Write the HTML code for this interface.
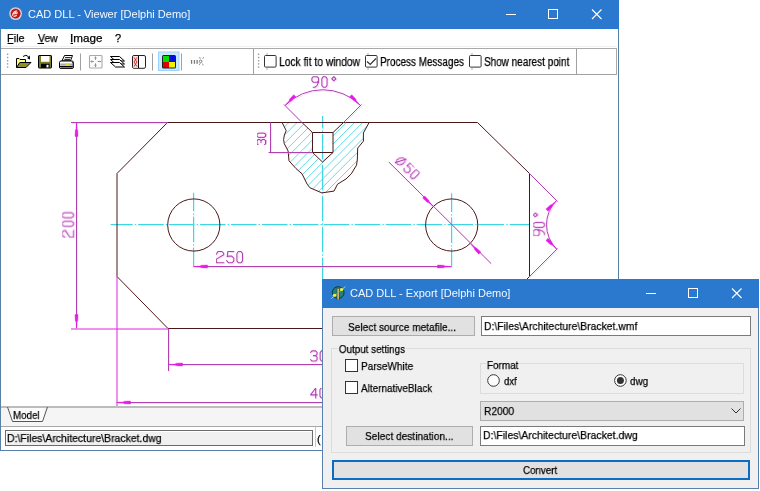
<!DOCTYPE html>
<html><head><meta charset="utf-8"><style>
*{margin:0;padding:0;box-sizing:border-box}
html,body{width:760px;height:491px;overflow:hidden;background:#fff;font-family:"Liberation Sans",sans-serif;color:#000}
.a{position:absolute}
.t{position:absolute;white-space:nowrap;line-height:1;font-family:"Liberation Sans",sans-serif;transform-origin:0 0;will-change:transform;-webkit-text-stroke:0.25px currentColor}
svg.a{overflow:visible}
</style></head><body>
<div class="a" style="left:0px;top:0px;width:619px;height:451px;border:1px solid #5b80a8;background:#fff"></div>
<div class="a" style="left:0px;top:0px;width:619px;height:29px;background:#2b79cf"></div>
<div class="a" style="left:1px;top:46px;width:616px;height:1px;background:#f0f0f0"></div>
<div class="a" style="left:1px;top:48px;width:616px;height:27px;border-top:1px solid #a9a9a9;border-bottom:1px solid #a0a0a0;border-right:1px solid #a9a9a9;background:#fff"></div>
<svg class="a" style="left:0;top:0" width="619" height="406" viewBox="0 0 619 406">
<defs><filter id="mh" filterUnits="userSpaceOnUse" x="0" y="0" width="619" height="406"><feDropShadow dx="0.8" dy="1" stdDeviation="0.35" flood-color="#ff90ff" flood-opacity="0.35"/></filter><filter id="ch" filterUnits="userSpaceOnUse" x="0" y="0" width="619" height="406"><feDropShadow dx="0.7" dy="0.9" stdDeviation="0.35" flood-color="#70f0ff" flood-opacity="0.45"/></filter><clipPath id="dc"><rect x="1" y="75" width="617" height="331"/></clipPath>
<clipPath id="hc"><path clip-rule="evenodd" d="M282.1,122.5 286.2,130.6 284.4,135 283.6,139.4 284.2,143.5 288.1,151 289,160.8 296,168.6 302,173.8 307.2,184.2 309.8,187.7 321.9,192.9 334,191.1 337.5,184.2 346,179 351.3,173.8 356.5,165.2 357.3,160 357.7,148.1 363.4,141.2 363.4,133 369.1,122.5 Z M302,122.5 L312.5,132.5 L312.5,152.5 L322.5,162 L333,152.5 L333,132.5 L343.5,122.5 Z"/></clipPath></defs>
<g clip-path="url(#dc)">
<g clip-path="url(#hc)"><path d="M94.80000000000001,210 L194.8,110 M103.0,210 L203.0,110 M111.20000000000005,210 L211.20000000000005,110 M119.40000000000003,210 L219.40000000000003,110 M127.60000000000002,210 L227.60000000000002,110 M135.8,210 L235.8,110 M144.0,210 L244.0,110 M152.20000000000005,210 L252.20000000000005,110 M160.40000000000003,210 L260.40000000000003,110 M168.60000000000002,210 L268.6,110 M176.8,210 L276.8,110 M185.0,210 L285.0,110 M193.20000000000005,210 L293.20000000000005,110 M201.40000000000003,210 L301.40000000000003,110 M209.60000000000002,210 L309.6,110 M217.8,210 L317.8,110 M226.0,210 L326.0,110 M234.2,210 L334.2,110 M242.40000000000003,210 L342.40000000000003,110 M250.60000000000002,210 L350.6,110 M258.8,210 L358.8,110 M267.0,210 L367.0,110 M275.2,210 L375.2,110 M283.40000000000003,210 L383.40000000000003,110 M291.6,210 L391.6,110 M299.8,210 L399.8,110 M308.0,210 L408.0,110 M316.20000000000005,210 L416.20000000000005,110 M324.4,210 L424.4,110 M332.6,210 L432.6,110 M340.79999999999995,210 L440.79999999999995,110 M349.0,210 L449.0,110 M357.20000000000005,210 L457.20000000000005,110 M365.4,210 L465.4,110 M373.6,210 L473.6,110 M381.79999999999995,210 L481.79999999999995,110 M390.0,210 L490.0,110 M398.20000000000005,210 L498.20000000000005,110 M406.4,210 L506.4,110 M414.6,210 L514.6,110" stroke="#52d8e2" stroke-width="0.9" fill="none"/></g>
<line x1="110.6" y1="224.5" x2="529" y2="224.5" stroke="#3cd6e2" filter="url(#ch)" stroke-width="1" stroke-dasharray="25.5 2.2 1.3 1.95" stroke-dashoffset="3.45"/>
<line x1="322.5" y1="116" x2="322.5" y2="406" stroke="#3cd6e2" filter="url(#ch)" stroke-width="1" stroke-dasharray="25.5 2.2 1.3 1.95" stroke-dashoffset="13.1"/>
<line x1="193.5" y1="192.8" x2="193.5" y2="266.5" stroke="#3cd6e2" filter="url(#ch)" stroke-width="1" stroke-dasharray="25.5 2.2 1.3 1.95" stroke-dashoffset="7.1"/>
<line x1="451.5" y1="193.2" x2="451.5" y2="266.5" stroke="#3cd6e2" filter="url(#ch)" stroke-width="1" stroke-dasharray="25.5 2.2 1.3 1.95" stroke-dashoffset="6.7"/>
<path d="M167.5,122.5 L477.5,122.5 L529.5,173.5 L529.5,276.5 L477.5,328.5 L168,328.5 L117,276.5 L117,173.5 Z" fill="none" stroke="#4a1818" stroke-width="1"/>
<path d="M282.1,122.5 286.2,130.6 284.4,135 283.6,139.4 284.2,143.5 288.1,151 289,160.8 296,168.6 302,173.8 307.2,184.2 309.8,187.7 321.9,192.9 334,191.1 337.5,184.2 346,179 351.3,173.8 356.5,165.2 357.3,160 357.7,148.1 363.4,141.2 363.4,133 369.1,122.5" fill="none" stroke="#4a1818" stroke-width="1"/>
<path d="M302,122.5 L312.5,132.5 L333,132.5 L343.5,122.5 M312.5,132.5 L312.5,152.5 L333,152.5 L333,132.5 M312.5,152.5 L322.5,162 L333,152.5" fill="none" stroke="#4a1818" stroke-width="1"/>
<circle cx="193.8" cy="225" r="26.1" fill="none" stroke="#4a1818" stroke-width="1"/>
<circle cx="451.7" cy="225" r="26.1" fill="none" stroke="#4a1818" stroke-width="1"/>
<line x1="71" y1="122.5" x2="167.5" y2="122.5" stroke="#b040b0" filter="url(#mh)" stroke-width="1" />
<line x1="71" y1="329" x2="168" y2="329" stroke="#e020e0" stroke-width="1" />
<line x1="76.5" y1="122.5" x2="76.5" y2="328.5" stroke="#b040b0" filter="url(#mh)" stroke-width="1" />
<polygon points="76.50,123.00 77.00,129.00 77.75,130.50 78.00,136.50 75.00,136.50 75.25,130.50 76.00,129.00" fill="#e81ae8" stroke="#e81ae8" stroke-width="0.4"/>
<polygon points="76.50,328.00 76.00,322.00 75.25,320.50 75.00,314.50 78.00,314.50 77.75,320.50 77.00,322.00" fill="#e81ae8" stroke="#e81ae8" stroke-width="0.4"/>
<path transform="translate(62.2,237.6) rotate(-90)" d="M0.30,2.70 L1.74,0.00 L5.52,0.00 L6.96,1.90 L6.96,3.20 L0.30,7.60 L0.30,11.30 L7.14,11.30 M12.55,0.00 L14.89,0.00 L16.24,2.00 L16.24,9.30 L14.89,11.30 L12.55,11.30 L11.20,9.30 L11.20,2.00 L12.55,0.00 M21.15,0.00 L23.49,0.00 L24.84,2.00 L24.84,9.30 L23.49,11.30 L21.15,11.30 L19.80,9.30 L19.80,2.00 L21.15,0.00" fill="none" stroke="#b040b0" filter="url(#mh)" stroke-width="1.1" stroke-linejoin="round" stroke-linecap="round"/>
<line x1="270.5" y1="122.5" x2="270.5" y2="152.5" stroke="#b040b0" filter="url(#mh)" stroke-width="1" />
<line x1="268.5" y1="152.5" x2="312.5" y2="152.5" stroke="#b040b0" filter="url(#mh)" stroke-width="1" />
<path transform="translate(257,145) rotate(-90)" d="M0.00,1.22 L1.22,0.00 L4.26,0.00 L5.47,1.22 L5.47,2.74 L4.26,4.03 L2.28,4.03 M4.26,4.03 L5.47,5.32 L5.47,7.30 L4.26,8.59 L1.22,8.59 L0.00,7.30 M8.74,0.00 L10.72,0.00 L11.86,1.52 L11.86,7.07 L10.72,8.59 L8.74,8.59 L7.60,7.07 L7.60,1.52 L8.74,0.00" fill="none" stroke="#b040b0" filter="url(#mh)" stroke-width="1.1" stroke-linejoin="round" stroke-linecap="round"/>
<path d="M285.27,105.27 A53,53 0 0 1 360.23,105.27" fill="none" stroke="#b040b0" filter="url(#mh)" stroke-width="1"/>
<line x1="302" y1="122.5" x2="284" y2="104.5" stroke="#b040b0" filter="url(#mh)" stroke-width="1" />
<line x1="343.5" y1="122.5" x2="361.5" y2="104.5" stroke="#b040b0" filter="url(#mh)" stroke-width="1" />
<polygon points="285.27,105.27 289.16,100.68 289.69,99.09 293.76,94.67 295.88,96.79 291.46,100.85 289.87,101.38" fill="#e81ae8" stroke="#e81ae8" stroke-width="0.4"/>
<polygon points="360.23,105.27 355.63,101.38 354.04,100.85 349.62,96.79 351.74,94.67 355.81,99.09 356.34,100.68" fill="#e81ae8" stroke="#e81ae8" stroke-width="0.4"/>
<path transform="translate(311.9,76.7) rotate(0)" d="M6.70,3.91 L5.21,5.58 L1.49,5.58 L0.00,3.91 L0.00,1.49 L1.49,0.00 L5.21,0.00 L6.70,1.49 L6.70,5.21 L5.02,8.93 L2.98,10.51 L1.30,10.51 M11.35,0.00 L13.76,0.00 L15.16,1.86 L15.16,8.65 L13.76,10.51 L11.35,10.51 L9.95,8.65 L9.95,1.86 L11.35,0.00 M21.95,0.00 L23.99,2.05 L21.95,4.09 L19.90,2.05 L21.95,0.00" fill="none" stroke="#b040b0" filter="url(#mh)" stroke-width="1.1" stroke-linejoin="round" stroke-linecap="round"/>
<path d="M556.53,200.53 A34.25,34.25 0 0 0 556.53,248.97" fill="none" stroke="#b040b0" filter="url(#mh)" stroke-width="1"/>
<line x1="529.5" y1="173.5" x2="557.5" y2="201.5" stroke="#b040b0" filter="url(#mh)" stroke-width="1" />
<line x1="529.5" y1="276.5" x2="557.5" y2="248.5" stroke="#b040b0" filter="url(#mh)" stroke-width="1" />
<polygon points="556.53,200.53 552.64,205.13 552.11,206.72 548.05,211.14 545.92,209.02 550.34,204.95 551.94,204.42" fill="#e81ae8" stroke="#e81ae8" stroke-width="0.4"/>
<polygon points="556.53,248.97 551.94,245.08 550.34,244.55 545.92,240.48 548.05,238.36 552.11,242.78 552.64,244.37" fill="#e81ae8" stroke="#e81ae8" stroke-width="0.4"/>
<path transform="translate(533.2,236.1) rotate(-90)" d="M6.34,4.20 L4.93,6.00 L1.41,6.00 L0.00,4.20 L0.00,1.60 L1.41,0.00 L4.93,0.00 L6.34,1.60 L6.34,5.60 L4.75,9.60 L2.82,11.30 L1.23,11.30 M9.92,0.00 L12.21,0.00 L13.53,2.00 L13.53,9.30 L12.21,11.30 L9.92,11.30 L8.60,9.30 L8.60,2.00 L9.92,0.00 M21.14,0.00 L23.07,2.20 L21.14,4.40 L19.20,2.20 L21.14,0.00" fill="none" stroke="#b040b0" filter="url(#mh)" stroke-width="1.1" stroke-linejoin="round" stroke-linecap="round"/>
<line x1="388.9" y1="162.1" x2="491.1" y2="263.5" stroke="#b040b0" filter="url(#mh)" stroke-width="1" />
<polygon points="433.30,206.60 428.70,202.71 427.11,202.18 422.69,198.11 424.81,195.99 428.88,200.41 429.41,202.00" fill="#e81ae8" stroke="#e81ae8" stroke-width="0.4"/>
<polygon points="470.30,243.60 474.90,247.49 476.49,248.02 480.91,252.09 478.79,254.21 474.72,249.79 474.19,248.20" fill="#e81ae8" stroke="#e81ae8" stroke-width="0.4"/>
<ellipse cx="400.6" cy="161.2" rx="4.6" ry="3.2" transform="rotate(-22 400.6 161.2)" fill="none" stroke="#b040b0" filter="url(#mh)" stroke-width="1.1"/>
<line x1="394.8" y1="162.8" x2="406.5" y2="159" stroke="#b040b0" filter="url(#mh)" stroke-width="1.1" />
<path transform="translate(409.8,162.1) rotate(45)" d="M6.34,0.00 L1.06,0.00 L0.53,4.58 L1.94,4.05 L4.58,4.05 L6.34,5.81 L6.34,8.45 L4.75,9.94 L1.76,9.94 L0.00,8.10 M11.00,0.00 L13.29,0.00 L14.61,1.76 L14.61,8.18 L13.29,9.94 L11.00,9.94 L9.68,8.18 L9.68,1.76 L11.00,0.00" fill="none" stroke="#b040b0" filter="url(#mh)" stroke-width="1.1" stroke-linejoin="round" stroke-linecap="round"/>
<line x1="193.5" y1="266.5" x2="451.5" y2="266.5" stroke="#b040b0" filter="url(#mh)" stroke-width="1" />
<polygon points="194.00,266.50 200.00,266.00 201.50,265.25 207.50,265.00 207.50,268.00 201.50,267.75 200.00,267.00" fill="#e81ae8" stroke="#e81ae8" stroke-width="0.4"/>
<polygon points="451.00,266.50 445.00,267.00 443.50,267.75 437.50,268.00 437.50,265.00 443.50,265.25 445.00,266.00" fill="#e81ae8" stroke="#e81ae8" stroke-width="0.4"/>
<path transform="translate(216.3,251.5) rotate(0)" d="M0.00,2.70 L1.60,0.00 L5.80,0.00 L7.40,1.90 L7.40,3.20 L0.00,7.60 L0.00,11.30 L7.60,11.30 M17.50,0.00 L11.50,0.00 L10.90,5.20 L12.50,4.60 L15.50,4.60 L17.50,6.60 L17.50,9.60 L15.70,11.30 L12.30,11.30 L10.30,9.20 M22.10,0.00 L24.70,0.00 L26.20,2.00 L26.20,9.30 L24.70,11.30 L22.10,11.30 L20.60,9.30 L20.60,2.00 L22.10,0.00" fill="none" stroke="#b040b0" filter="url(#mh)" stroke-width="1.1" stroke-linejoin="round" stroke-linecap="round"/>
<line x1="117" y1="276.5" x2="117" y2="406" stroke="#e020e0" stroke-width="1" />
<line x1="168.5" y1="328.5" x2="168.5" y2="371" stroke="#b040b0" filter="url(#mh)" stroke-width="1" />
<line x1="168.5" y1="364.5" x2="619" y2="364.5" stroke="#b040b0" filter="url(#mh)" stroke-width="1" />
<line x1="116.5" y1="402.5" x2="619" y2="402.5" stroke="#b040b0" filter="url(#mh)" stroke-width="1" />
<polygon points="169.00,364.50 175.00,364.00 176.50,363.25 182.50,363.00 182.50,366.00 176.50,365.75 175.00,365.00" fill="#e81ae8" stroke="#e81ae8" stroke-width="0.4"/>
<polygon points="117.00,402.50 123.00,402.00 124.50,401.25 130.50,401.00 130.50,404.00 124.50,403.75 123.00,403.00" fill="#e81ae8" stroke="#e81ae8" stroke-width="0.4"/>
<path transform="translate(310.6,350.9) rotate(0)" d="M0.00,1.44 L1.44,0.00 L5.04,0.00 L6.48,1.44 L6.48,3.24 L5.04,4.77 L2.70,4.77 M5.04,4.77 L6.48,6.30 L6.48,8.64 L5.04,10.17 L1.44,10.17 L0.00,8.64 M10.89,0.00 L13.23,0.00 L14.58,1.80 L14.58,8.37 L13.23,10.17 L10.89,10.17 L9.54,8.37 L9.54,1.80 L10.89,0.00 M20.43,0.00 L22.77,0.00 L24.12,1.80 L24.12,8.37 L22.77,10.17 L20.43,10.17 L19.08,8.37 L19.08,1.80 L20.43,0.00" fill="none" stroke="#b040b0" filter="url(#mh)" stroke-width="1.1" stroke-linejoin="round" stroke-linecap="round"/>
<path transform="translate(310.6,388.0) rotate(0)" d="M5.10,9.94 L5.10,0.00 L0.00,6.86 L6.69,6.86 M10.65,0.00 L12.94,0.00 L14.26,1.76 L14.26,8.18 L12.94,9.94 L10.65,9.94 L9.33,8.18 L9.33,1.76 L10.65,0.00 M19.98,0.00 L22.26,0.00 L23.58,1.76 L23.58,8.18 L22.26,9.94 L19.98,9.94 L18.66,8.18 L18.66,1.76 L19.98,0.00" fill="none" stroke="#b040b0" filter="url(#mh)" stroke-width="1.1" stroke-linejoin="round" stroke-linecap="round"/>
</g></svg>
<div class="a" style="left:1px;top:406px;width:617px;height:21px;background:#f5f5f5;border-top:2px solid #bcbcbc;border-bottom:1px solid #a8a8a8"></div>
<div class="a" style="left:1px;top:427px;width:617px;height:23px;background:#fff"></div>
<div class="a" style="left:12px;top:408px;width:32px;height:14px;background:#fbfbfb"></div>
<div class="a" style="left:5px;top:430px;width:308px;height:16px;background:#f0f0f0;border:1px solid #6a6a6a;box-shadow:inset 1px 1px 0 #fff"></div>
<div class="a" style="left:315px;top:427px;width:4px;height:20px;border-left:1px solid #c8c8c8"></div>
<div class="a" style="left:0px;top:450px;width:619px;height:1px;background:#5b80a8"></div>
<div class="a" style="left:322px;top:279px;width:437px;height:210px;border:1px solid #5a80ae;background:#f0f0f0"></div>
<div class="a" style="left:322px;top:279px;width:437px;height:29px;background:#2b79cf"></div>
<div class="a" style="left:332px;top:316px;width:143px;height:20px;background:#e1e1e1;border:1px solid #adadad"></div>
<div class="a" style="left:481px;top:316px;width:270px;height:20px;background:#fff;border:1px solid #7a7a7a"></div>
<div class="a" style="left:331px;top:348px;width:420px;height:105px;border:1px solid #dcdcdc"></div>
<div class="a" style="left:345px;top:359px;width:13px;height:13px;border:1px solid #333;background:#fff"></div>
<div class="a" style="left:345px;top:381px;width:13px;height:13px;border:1px solid #333;background:#fff"></div>
<div class="a" style="left:480px;top:363px;width:264px;height:31px;border:1px solid #dcdcdc"></div>
<div class="a" style="left:480px;top:401px;width:264px;height:20px;background:#e1e1e1;border:1px solid #adadad"></div>
<div class="a" style="left:346px;top:426px;width:127px;height:20px;background:#e1e1e1;border:1px solid #adadad"></div>
<div class="a" style="left:480px;top:426px;width:265px;height:20px;background:#fff;border:1px solid #7a7a7a"></div>
<div class="a" style="left:332px;top:460px;width:418px;height:20px;background:#e1e1e1;border:2px solid #0a6cc4"></div>
<div class="t" style="left:28.25px;top:9.44px;font-size:11px;color:#f4f8ff;transform:scaleX(1.0019);-webkit-text-stroke:0">CAD DLL - Viewer [Delphi Demo]</div>
<div class="t" style="left:6.85px;top:32.69px;font-size:11px;color:#000;transform:scaleX(0.9915);">File</div>
<div class="t" style="left:37.80px;top:32.69px;font-size:11px;color:#000;transform:scaleX(0.9504);">Vew</div>
<div class="t" style="left:69.74px;top:32.69px;font-size:11px;color:#000;transform:scaleX(1.0598);">Image</div>
<div class="t" style="left:114.60px;top:32.69px;font-size:11px;color:#000;">?</div>
<div class="t" style="left:278.70px;top:55.64px;font-size:12px;color:#000;transform:scaleX(0.8556);">Lock fit to window</div>
<div class="t" style="left:380.30px;top:55.64px;font-size:12px;color:#000;transform:scaleX(0.8284);">Process Messages</div>
<div class="t" style="left:484.40px;top:55.64px;font-size:12px;color:#000;transform:scaleX(0.8300);">Show nearest point</div>
<div class="t" style="left:13.40px;top:409.61px;font-size:10.5px;color:#000;transform:scaleX(0.9320);">Model</div>
<div class="t" style="left:6.50px;top:432.69px;font-size:11px;color:#000;transform:scaleX(0.9509);">D:\Files\Architecture\Bracket.dwg</div>
<div class="t" style="left:316.60px;top:434.39px;font-size:11px;color:#000;">(</div>
<div class="t" style="left:350.25px;top:288.44px;font-size:11px;color:#f4f8ff;transform:scaleX(0.9971);-webkit-text-stroke:0">CAD DLL - Export [Delphi Demo]</div>
<div class="t" style="left:348.25px;top:320.55px;font-size:11.75px;color:#000;transform:scaleX(0.8622);">Select source metafile...</div>
<div class="t" style="left:484.10px;top:319.85px;font-size:11.75px;color:#000;transform:scaleX(0.8825);">D:\Files\Architecture\Bracket.wmf</div>
<div class="t" style="left:338.70px;top:342.95px;font-size:11.75px;color:#000;transform:scaleX(0.8376);background:#f0f0f0;padding:0 1px;margin-left:-1px">Output settings</div>
<div class="t" style="left:360.50px;top:359.75px;font-size:11.75px;color:#000;transform:scaleX(0.8590);">ParseWhite</div>
<div class="t" style="left:361.15px;top:381.55px;font-size:11.75px;color:#000;transform:scaleX(0.8457);">AlternativeBlack</div>
<div class="t" style="left:486.50px;top:358.80px;font-size:11.75px;color:#000;transform:scaleX(0.8460);background:#f0f0f0;padding:0 1px;margin-left:-1px">Format</div>
<div class="t" style="left:503.60px;top:374.65px;font-size:11.75px;color:#000;transform:scaleX(0.8069);">dxf</div>
<div class="t" style="left:630.00px;top:374.75px;font-size:11.75px;color:#000;transform:scaleX(0.8421);">dwg</div>
<div class="t" style="left:483.80px;top:404.85px;font-size:11.75px;color:#000;transform:scaleX(0.8715);">R2000</div>
<div class="t" style="left:364.75px;top:430.05px;font-size:11.75px;color:#000;transform:scaleX(0.8631);">Select destination...</div>
<div class="t" style="left:482.80px;top:429.25px;font-size:11.75px;color:#000;transform:scaleX(0.8906);">D:\Files\Architecture\Bracket.dwg</div>
<div class="t" style="left:523.25px;top:464.05px;font-size:11.75px;color:#000;transform:scaleX(0.8299);">Convert</div>
<svg class="a" style="left:0;top:0" width="760" height="491" viewBox="0 0 760 491">
<circle cx="15.6" cy="13.6" r="6.4" fill="#dcc8d0"/>
<circle cx="15.6" cy="13.6" r="5.6" fill="#f2eef2"/>
<circle cx="15.6" cy="13.6" r="4.7" fill="#c41414" stroke="#901010" stroke-width="0.6"/>
<path d="M12.6,15.8 C12.8,12.5 14.5,11 17.2,11.2 M13.8,14 L17.8,12.6 M13.6,16.6 L16.8,15.4 M15.2,12.2 L16.6,14.2" stroke="#ffe0e0" stroke-width="1.3" fill="none"/>
<line x1="506" y1="14.5" x2="516" y2="14.5" stroke="#ffffff" stroke-width="1"/>
<rect x="548.5" y="9.5" width="9" height="9" fill="none" stroke="#ffffff" stroke-width="1"/>
<path d="M592,9.5 L601.5,19 M601.5,9.5 L592,19" stroke="#ffffff" stroke-width="1.1"/>
<path d="M7.5,43.5 L13.5,43.5 M37.5,43.5 L44,43.5 M70.5,43.5 L73,43.5" stroke="#000" stroke-width="1"/>
<rect x="6.9" y="53.6" width="1.4" height="1.4" fill="#9a9a9a"/>
<rect x="6.9" y="56.8" width="1.4" height="1.4" fill="#9a9a9a"/>
<rect x="6.9" y="60.0" width="1.4" height="1.4" fill="#9a9a9a"/>
<rect x="6.9" y="63.2" width="1.4" height="1.4" fill="#9a9a9a"/>
<rect x="6.9" y="66.4" width="1.4" height="1.4" fill="#9a9a9a"/>
<rect x="257.9" y="53.6" width="1.4" height="1.4" fill="#9a9a9a"/>
<rect x="257.9" y="56.8" width="1.4" height="1.4" fill="#9a9a9a"/>
<rect x="257.9" y="60.0" width="1.4" height="1.4" fill="#9a9a9a"/>
<rect x="257.9" y="63.2" width="1.4" height="1.4" fill="#9a9a9a"/>
<rect x="257.9" y="66.4" width="1.4" height="1.4" fill="#9a9a9a"/>
<line x1="80.5" y1="53.5" x2="80.5" y2="70.5" stroke="#a0a0a0" stroke-width="1"/>
<line x1="152.5" y1="53.5" x2="152.5" y2="70.5" stroke="#a0a0a0" stroke-width="1"/>
<line x1="181.5" y1="53.5" x2="181.5" y2="70.5" stroke="#a0a0a0" stroke-width="1"/>
<line x1="253.5" y1="49" x2="253.5" y2="74" stroke="#a0a0a0" stroke-width="1"/>
<line x1="576.5" y1="49" x2="576.5" y2="74" stroke="#a0a0a0" stroke-width="1"/>
<path d="M16.5,67.5 L16.5,58.5 L19,58.5 L20,59.5 L25.5,59.5 L25.5,62.5" fill="#ffff80" stroke="#000" stroke-width="1"/>
<path d="M16.5,67.5 L19.8,62.5 L31,62.5 L26,67.5 Z" fill="#8f8f2c" stroke="#000" stroke-width="1"/>
<path d="M23,56.5 Q26,53.8 28.6,56.8" fill="none" stroke="#000" stroke-width="1"/>
<path d="M29.8,55.6 L30,59.5 L27.2,58.3 Z" fill="#000"/>
<rect x="38.5" y="55.5" width="13" height="12.5" rx="0.6" fill="#7c7c24" stroke="#000" stroke-width="1"/>
<rect x="41" y="56" width="8.5" height="5.8" fill="#fff"/>
<rect x="41" y="63.8" width="8.5" height="4" fill="#000"/>
<rect x="46.5" y="64.8" width="2" height="2.6" fill="#fff"/>
<path d="M62,60.8 L64.5,55.5 L72.5,55.5 L70.5,60.8 Z" fill="#fff" stroke="#000" stroke-width="1"/>
<path d="M65,57.6 L70.8,57.6 M64.3,59.4 L70,59.4" stroke="#000" stroke-width="0.9"/>
<rect x="59.5" y="61" width="14" height="7.5" rx="1.5" fill="#fff" stroke="#000" stroke-width="1"/>
<rect x="60.2" y="63.5" width="12.6" height="2.2" fill="#a8a8a8"/>
<rect x="65.5" y="63.6" width="4" height="2" fill="#d8d840"/>
<line x1="60" y1="66.5" x2="73" y2="66.5" stroke="#000" stroke-width="1"/>
<rect x="60.5" y="67" width="12" height="1.2" fill="#7a7a7a"/>
<path d="M71.5,61.5 L73,63 L73,67.5" stroke="#444" stroke-width="1" fill="none"/>
<rect x="89.5" y="55.5" width="12.5" height="12.5" rx="0.8" fill="#fdfdfd" stroke="#aaaaaa" stroke-width="1.1"/>
<path d="M95.5,56.5 V59.8 M90.5,61.5 H93.8 M97.6,61.5 H101.2 M95.5,63.4 V67" stroke="#8a8a8a" stroke-width="1"/>
<path d="M94.3,58 H96.7 M91.8,60.3 V62.7 M99.3,60.8 V62.2 M94.3,65.3 H96.7" stroke="#9a9a9a" stroke-width="1"/>
<path d="M110.5,56.5 L119.5,56.5 L124.5,61 L115.5,61 Z" fill="#fff" stroke="#000" stroke-width="1"/>
<path d="M110.5,59.5 L119.5,59.5 L124.5,64 L115.5,64 Z" fill="#fff" stroke="#000" stroke-width="1"/>
<path d="M110.5,62.5 L119.5,62.5 L124.5,67 L115.5,67 Z" fill="#fff" stroke="#000" stroke-width="1"/>
<rect x="132.5" y="55.5" width="13" height="12.8" rx="1.5" fill="#fff" stroke="#222" stroke-width="1"/>
<rect x="133.2" y="56.2" width="5" height="11.4" fill="#f0dede"/>
<path d="M134,57.5 L137,62 L134,66.5 M137,57.5 L134,62 L137,66.5" stroke="#d02020" stroke-width="0.9" fill="none"/>
<line x1="138.5" y1="56" x2="138.5" y2="68" stroke="#000" stroke-width="1"/>
<rect x="158.5" y="52" width="20.5" height="18.5" fill="#cce8ff" stroke="#99d1ff" stroke-width="1"/>
<rect x="162" y="55" width="14" height="13.5" rx="1.5" fill="#202020"/>
<rect x="163" y="56" width="6" height="6" fill="#00e000"/>
<rect x="169" y="56" width="6" height="6" fill="#0010e0"/>
<rect x="163" y="62" width="6" height="5.5" fill="#e00000"/>
<rect x="169" y="62" width="6" height="5.5" fill="#f0f000"/>
<rect x="190.9" y="60" width="1.3" height="3.8" fill="#7a7a7a"/>
<rect x="193.8" y="60" width="1.3" height="3.8" fill="#7a7a7a"/>
<rect x="196.5" y="60" width="1.3" height="3.8" fill="#7a7a7a"/>
<path d="M199.5,57 L203.7,66.5 M203.7,57 L198.4,66.5" stroke="#8a8a8a" stroke-width="0.9" stroke-dasharray="2 1.6"/>
<circle cx="200.6" cy="61.4" r="1.3" fill="#fff" stroke="#777" stroke-width="0.9"/>
<rect x="264.5" y="55.5" width="11.6" height="11.6" rx="1" fill="#fff" stroke="#333" stroke-width="1"/>
<line x1="267.0" y1="53" x2="267.0" y2="55" stroke="#999" stroke-width="0.8"/>
<line x1="267.0" y1="68" x2="267.0" y2="70" stroke="#999" stroke-width="0.8"/>
<rect x="365.5" y="55.5" width="11.6" height="11.6" rx="1" fill="#fff" stroke="#333" stroke-width="1"/>
<line x1="368.0" y1="53" x2="368.0" y2="55" stroke="#999" stroke-width="0.8"/>
<line x1="368.0" y1="68" x2="368.0" y2="70" stroke="#999" stroke-width="0.8"/>
<rect x="469.5" y="55.5" width="11.6" height="11.6" rx="1" fill="#fff" stroke="#333" stroke-width="1"/>
<line x1="472.0" y1="53" x2="472.0" y2="55" stroke="#999" stroke-width="0.8"/>
<line x1="472.0" y1="68" x2="472.0" y2="70" stroke="#999" stroke-width="0.8"/>
<path d="M367,61.5 L370.2,64.5 L376,58.5" fill="none" stroke="#333" stroke-width="1.2"/>
<path d="M7.5,407 L12.5,421.5 L42.5,421.5 L47.5,407" fill="none" stroke="#555" stroke-width="1"/>
<circle cx="338.2" cy="292.6" r="5.9" fill="#1c8478" stroke="#083838" stroke-width="1"/>
<path d="M331,298.8 L345.5,286.5" stroke="#c8d050" stroke-width="0.9"/>
<ellipse cx="334.6" cy="295.3" rx="1.8" ry="1.5" fill="#e8f040"/>
<ellipse cx="341.6" cy="289.6" rx="1.8" ry="1.5" fill="#e8f040"/>
<rect x="336.8" y="288.3" width="2.6" height="11.6" fill="#4a3010"/>
<rect x="337.4" y="288.6" width="1.4" height="11" fill="#f0d090"/>
<line x1="646" y1="293.5" x2="656" y2="293.5" stroke="#ffffff" stroke-width="1"/>
<rect x="688.5" y="288.5" width="9" height="9" fill="none" stroke="#ffffff" stroke-width="1"/>
<path d="M732,288.5 L741.5,298 M741.5,288.5 L732,298" stroke="#ffffff" stroke-width="1.1"/>
<circle cx="493.5" cy="380.5" r="5.8" fill="#fff" stroke="#333" stroke-width="1"/>
<circle cx="620.4" cy="380.5" r="5.8" fill="#fff" stroke="#333" stroke-width="1"/>
<circle cx="620.4" cy="380.5" r="3.5" fill="#333"/>
<path d="M731.5,408.5 L736,413 L740.5,408.5" fill="none" stroke="#333" stroke-width="1"/>
</svg>
</body></html>
